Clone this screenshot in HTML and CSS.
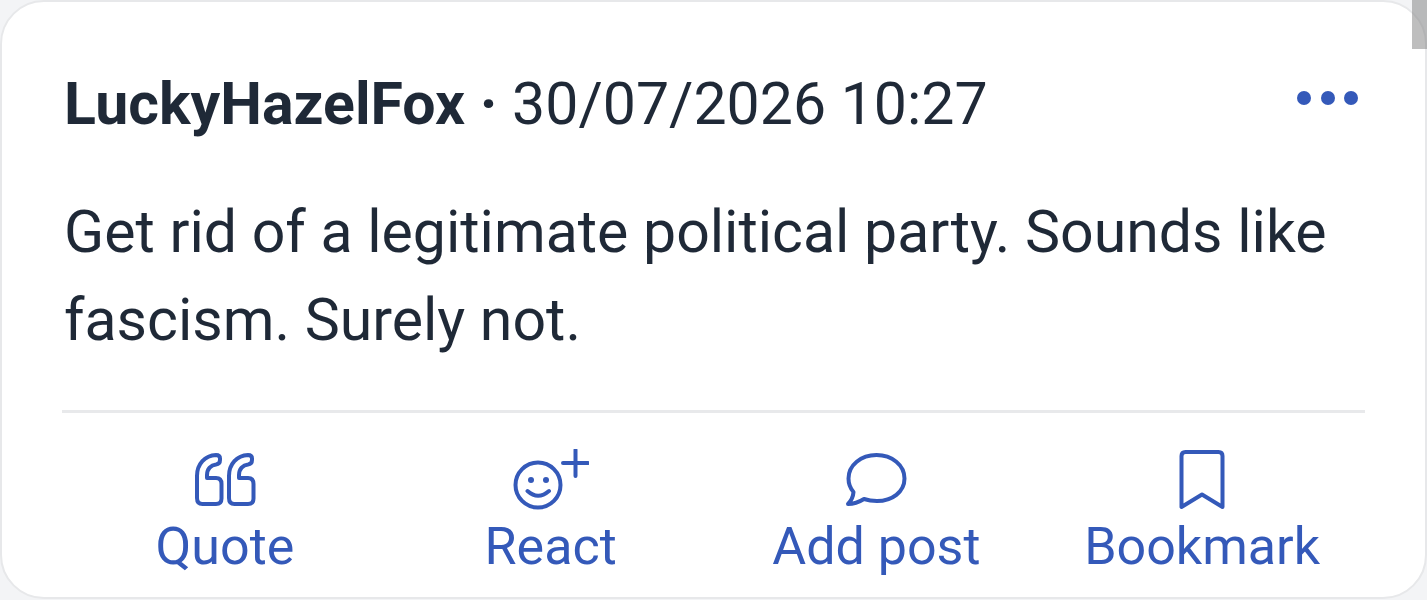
FILE: index.html
```html
<!DOCTYPE html>
<html lang="en">
<head>
<meta charset="utf-8">
<meta name="viewport" content="width=device-width, initial-scale=1">
<title>Post</title>
<link rel="stylesheet" href="styles.css">
</head>
<body>
<article class="post">
  <header class="post-header">
    <p class="byline"><strong class="author">LuckyHazelFox ·</strong> <time datetime="2026-07-30T10:27">30/07/2026 10:27</time></p>
    <button class="more" type="button" aria-label="More options">
      <svg class="dots" viewBox="0 0 64 16" width="64" height="16" aria-hidden="true"><circle cx="7" cy="8" r="7"/><circle cx="31" cy="8" r="7"/><circle cx="54" cy="8" r="7"/></svg>
    </button>
  </header>
  <p class="message">Get rid of a legitimate political party. Sounds like fascism. Surely not.</p>
  <footer class="actions">
    <button class="action" type="button">
      <svg class="icon" viewBox="0 0 64 64" width="64" height="64" aria-hidden="true"><path d="M23 6C12 6.500 4 15 4 27V49Q4 55 9.500 55H23Q28.500 55 28.500 49.500V35Q28.500 29 23 29H14V26C14 20 18 16 23 15.500Q27 15 27 11V9.500Q27 6 23 6ZM55 6C44 6.500 36 15 36 27V49Q36 55 41.500 55H55Q60.500 55 60.500 49.500V35Q60.500 29 55 29H46V26C46 20 50 16 55 15.500Q59 15 59 11V9.500Q59 6 55 6Z"/></svg>
      <span>Quote</span>
    </button>
    <button class="action" type="button">
      <svg class="icon" viewBox="0 0 76 64" width="76" height="64" aria-hidden="true"><circle cx="25" cy="36" r="22.500"/><path d="M14.500 42Q25 51.500 36 42M50 14H75M62.500 1V27"/><circle class="fill" cx="18" cy="31" r="3"/><circle class="fill" cx="33" cy="31" r="3"/></svg>
      <span>React</span>
    </button>
    <button class="action" type="button">
      <svg class="icon" viewBox="0 0 64 64" width="64" height="64" aria-hidden="true"><path d="M4 55Q9 50 9.500 43C6 39 4.500 34 4.500 29.500C4.500 16 17 6 32.500 6S60.500 16 60.500 29.500S48 52 33 52Q26 52 20 50Q12 55 4 55Z"/></svg>
      <span>Add post</span>
    </button>
    <button class="action" type="button">
      <svg class="icon" viewBox="0 0 64 64" width="64" height="64" aria-hidden="true"><path d="M11.500 58V7Q11.500 3 15.500 3H48.500Q52.500 3 52.500 7V58L32 45.500Z"/></svg>
      <span>Bookmark</span>
    </button>
  </footer>
</article>
<div class="scroll-thumb" aria-hidden="true"></div>
</body>
</html>
```
FILE: styles.css
```css
* { box-sizing: border-box; }
body { margin: 0; background: #f3f4f6; color: #1f2937; font-family: Roboto, "Noto Sans", sans-serif; }
.post { background: #fff; border: 2px solid #e7e8ea; border-radius: 44px; padding: 58px 60px 20px; }
.post-header { display: flex; justify-content: space-between; align-items: flex-start; }
.byline, .message { margin: 0; padding-left: 2px; font-size: 59px; line-height: 88px; }
.author { font-weight: 700; }
.more { border: 0; padding: 30px 4px; background: none; color: #3459b9; }
.dots { display: block; fill: currentColor; }
.message { margin-top: 40px; }
.actions { display: grid; grid-template-columns: repeat(4, 1fr); margin-top: 46px; padding-top: 36px; border-top: 3px solid #e8e9eb; }
.action { display: flex; flex-direction: column; align-items: center; gap: 4px; padding: 0; border: 0; background: none; color: #3459b9; font: inherit; font-size: 52px; line-height: 60px; white-space: nowrap; }
.icon { fill: none; stroke: currentColor; stroke-width: 4; stroke-linejoin: round; stroke-linecap: round; }
.fill { fill: currentColor; stroke: none; }
.scroll-thumb { position: absolute; top: 0; right: 0; width: 15px; height: 49px; background: rgba(125, 125, 125, 0.5); }
```
